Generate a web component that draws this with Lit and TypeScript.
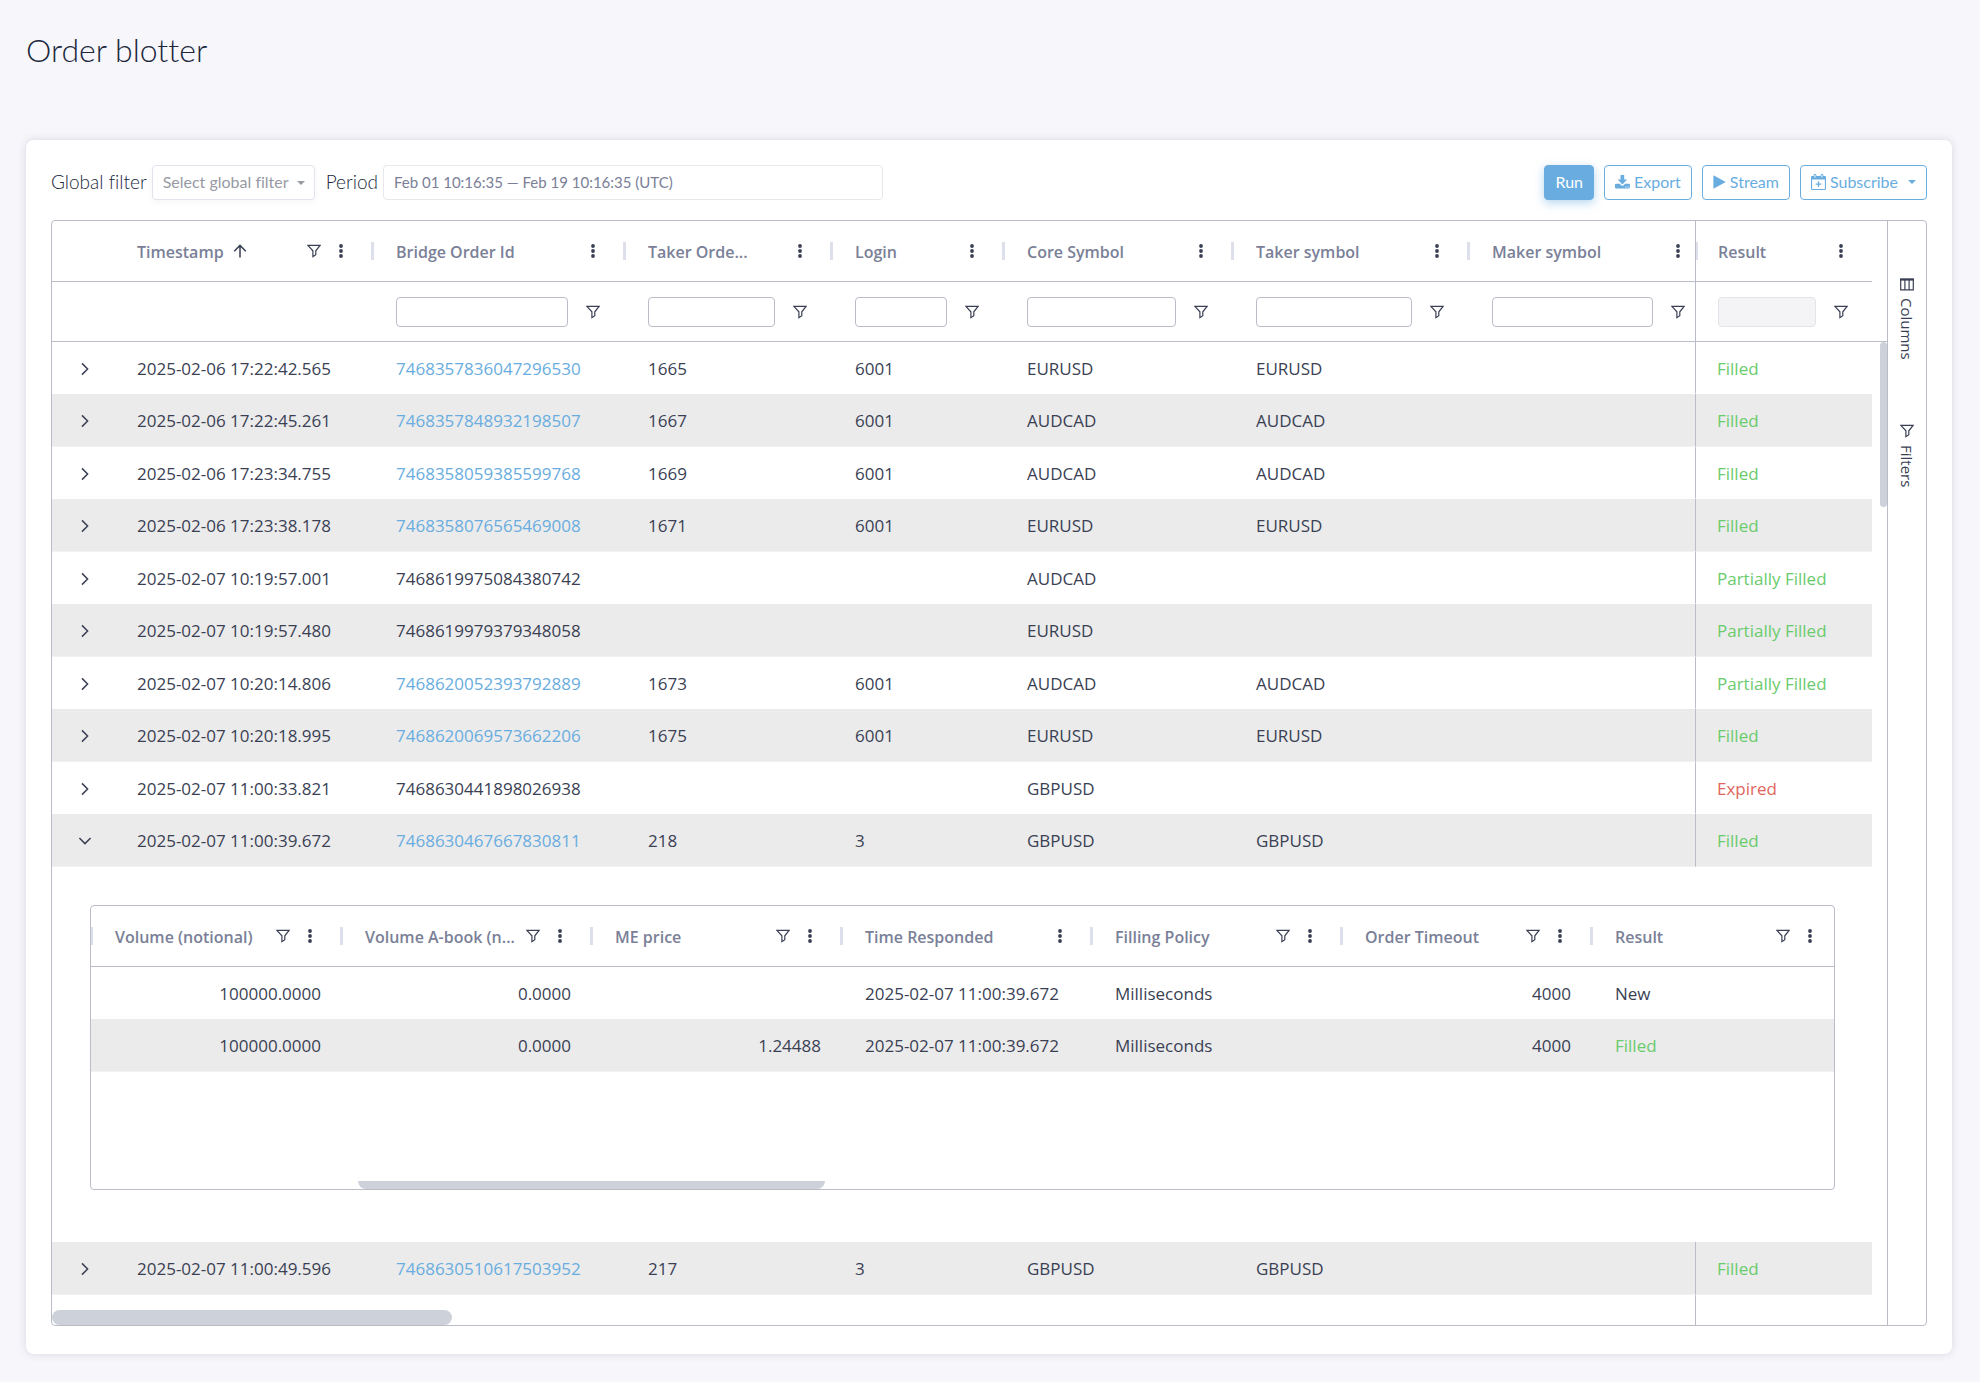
import { LitElement, html, css, svg, nothing } from "lit";
import { customElement, state } from "lit/decorators.js";
import { classMap } from "lit/directives/class-map.js";

interface Order {
  time: string;
  id: string;
  linked: boolean;
  takerOrder: string;
  login: string;
  core: string;
  taker: string;
  result: string;
}

interface Column {
  title: string;
  filterIcon?: boolean;
  sorted?: boolean;
}

const order = (
  time: string, id: string, linked: boolean, takerOrder: string,
  login: string, core: string, taker: string, result: string,
): Order => ({ time, id, linked, takerOrder, login, core, taker, result });

const ORDERS: Order[] = [
  order("2025-02-06 17:22:42.565", "7468357836047296530", true, "1665", "6001", "EURUSD", "EURUSD", "Filled"),
  order("2025-02-06 17:22:45.261", "7468357848932198507", true, "1667", "6001", "AUDCAD", "AUDCAD", "Filled"),
  order("2025-02-06 17:23:34.755", "7468358059385599768", true, "1669", "6001", "AUDCAD", "AUDCAD", "Filled"),
  order("2025-02-06 17:23:38.178", "7468358076565469008", true, "1671", "6001", "EURUSD", "EURUSD", "Filled"),
  order("2025-02-07 10:19:57.001", "7468619975084380742", false, "", "", "AUDCAD", "", "Partially Filled"),
  order("2025-02-07 10:19:57.480", "7468619979379348058", false, "", "", "EURUSD", "", "Partially Filled"),
  order("2025-02-07 10:20:14.806", "7468620052393792889", true, "1673", "6001", "AUDCAD", "AUDCAD", "Partially Filled"),
  order("2025-02-07 10:20:18.995", "7468620069573662206", true, "1675", "6001", "EURUSD", "EURUSD", "Filled"),
  order("2025-02-07 11:00:33.821", "7468630441898026938", false, "", "", "GBPUSD", "", "Expired"),
  order("2025-02-07 11:00:39.672", "7468630467667830811", true, "218", "3", "GBPUSD", "GBPUSD", "Filled"),
  order("2025-02-07 11:00:49.596", "7468630510617503952", true, "217", "3", "GBPUSD", "GBPUSD", "Filled"),
];

const COLUMNS: Column[] = [
  { title: "Timestamp", filterIcon: true, sorted: true },
  { title: "Bridge Order Id" },
  { title: "Taker Orde..." },
  { title: "Login" },
  { title: "Core Symbol" },
  { title: "Taker symbol" },
  { title: "Maker symbol" },
  { title: "Result" },
];

const DETAIL_COLUMNS: Column[] = [
  { title: "Volume (notional)", filterIcon: true },
  { title: "Volume A-book (n...", filterIcon: true },
  { title: "ME price", filterIcon: true },
  { title: "Time Responded" },
  { title: "Filling Policy", filterIcon: true },
  { title: "Order Timeout", filterIcon: true },
  { title: "Result", filterIcon: true },
];

const DETAILS = [
  ["100000.0000", "0.0000", "", "2025-02-07 11:00:39.672", "Milliseconds", "4000", "New"],
  ["100000.0000", "0.0000", "1.24488", "2025-02-07 11:00:39.672", "Milliseconds", "4000", "Filled"],
];

const NUMERIC = new Set([0, 1, 2, 5]);

const funnelIcon = svg`<svg class="icon" width="14" height="14" viewBox="0 0 14 14" aria-hidden="true">
  <path d="M.9 1.4h12.2L8.8 6.8v3.9L5.9 12.7V6.8z" fill="none" stroke="currentColor" stroke-width="1.2"/></svg>`;
const dotsIcon = svg`<svg class="icon" width="4" height="14" viewBox="0 0 4 14" aria-hidden="true">
  <g fill="currentColor"><circle cx="2" cy="2" r="1.9"/><circle cx="2" cy="7" r="1.9"/><circle cx="2" cy="12" r="1.9"/></g></svg>`;
const sortIcon = svg`<svg class="icon" width="14" height="14" viewBox="0 0 14 14" aria-hidden="true">
  <path d="M7 13.5V1.6M1.2 7.2 7 1.4l5.8 5.8" fill="none" stroke="currentColor" stroke-width="1.5"/></svg>`;
const chevronIcon = svg`<svg class="icon chevron" width="12" height="14" viewBox="0 0 12 14" aria-hidden="true">
  <path d="M3 1.4 8.600 7 3 12.600" fill="none" stroke="currentColor" stroke-width="1.500"/></svg>`;
const caretIcon = svg`<svg class="icon caret" width="8" height="4" viewBox="0 0 8 4" aria-hidden="true">
  <path d="M0 0h8L4 4z" fill="currentColor"/></svg>`;
const downloadIcon = svg`<svg class="icon" width="15" height="14" viewBox="0 0 15 14" aria-hidden="true">
  <path fill="currentColor" fill-rule="evenodd" d="M5.6 0h3.6v4.6h3L7.4 9.4 2.6 4.6h3zM.8 8.8h3.9l1.7 1.6q1 .9 2 0l1.7-1.6H14q.9 0 .9.8v3q0 .8-.9.8H.8q-.8 0-.8-.8v-3q0-.8.8-.8zm9.6 2.6v1h1.1v-1zm2.2 0v1h1.1v-1z"/></svg>`;
const playIcon = svg`<svg class="icon" width="13" height="14" viewBox="0 0 13 14" aria-hidden="true">
  <path d="M.4.3v13.4L12.8 7z" fill="currentColor"/></svg>`;
const calendarIcon = svg`<svg class="icon" width="15" height="16" viewBox="0 0 15 16" aria-hidden="true">
  <path fill="currentColor" fill-rule="evenodd" d="M1.2 2H2.6V1.2Q2.6 0 4 0t1.4 1.2V2h4.2v-.8Q9.6 0 11 0t1.4 1.2V2h1.4Q15 2 15 3.2v11.6Q15 16 13.8 16H1.2Q0 16 0 14.8V3.200Q0 2 1.2 2zM1.100 5.600v9.300h12.800V5.600zM3.600 1.100v2.500h.9V1.100zm6.900 0v2.500h.9V1.100z"/>
  <path d="M7.500 7.300v5.600M4.700 10.100h5.600" stroke="currentColor" stroke-width="1.300"/></svg>`;
const columnsIcon = svg`<svg class="icon" width="14" height="13" viewBox="0 0 14 13" aria-hidden="true">
  <path d="M.7 1.2h12.6v10.6H.7zM4.9 2v9.800M9.100 2v9.800" fill="none" stroke="currentColor" stroke-width="1.200"/>
  <path d="M.1.6h13.800v2H.1z" fill="currentColor"/></svg>`;

const tone = (value: string) => ({
  good: value.endsWith("Filled"),
  bad: value === "Expired",
});

@customElement("app-root")
export class OrderBlotter extends LitElement {
  @state() private expanded = "7468630467667830811";

  static styles = css`
    :host {
      --ink: #3a3f54;
      --muted: #7a8097;
      --line: #babcc8;
      --blue: #69ade0;
      --thumb: #cdd2da;
      display: block;
      box-sizing: border-box;
      min-height: 100vh;
      padding: 30px 28px 28px 26px;
      background: #f6f6fb;
      color: var(--ink);
      font-family: "Open Sans", "Noto Sans", sans-serif;
      font-size: 17px;
      font-variant-ligatures: none;
    }
    *, *::before { box-sizing: border-box; }
    button, input, select { font: inherit; color: inherit; margin: 0; }
    button { cursor: pointer; }
    .icon { display: block; flex: none; }
    .title {
      margin: 0 0 70px;
      font: 300 32px/40px Lato, sans-serif;
      font-variant-ligatures: none;
      color: #20263b;
    }
    .card {
      padding: 25px 25px 28px;
      border-radius: 8px;
      background: #fff;
      box-shadow: 0 0 8px rgba(60, 60, 80, 0.16);
    }
    .toolbar {
      display: flex;
      align-items: center;
      gap: 5px;
      height: 35px;
      margin-bottom: 20px;
      font-family: Lato, sans-serif;
    }
    .label {
      padding-bottom: 3px;
      font-size: 19px;
      font-weight: 300;
      color: #20263b;
    }
    .picker {
      position: relative;
      display: flex;
      align-items: center;
      margin-right: 6px;
      color: #979aa3;
    }
    .picker .caret { position: absolute; right: 10px; pointer-events: none; }
    .select {
      width: 163px;
      height: 35px;
      padding: 0 10px 2px;
      border: 1px solid #e2e3ec;
      border-radius: 4px;
      background: #fff;
      box-shadow: 0 2px 6px rgba(60, 60, 80, 0.05);
      appearance: none;
      font-size: 16px;
    }
    .period {
      width: 500px;
      height: 35px;
      padding: 0 10px 2px;
      border: 1px solid #e7e7ec;
      border-radius: 4px;
      background: #fff;
      color: var(--muted);
      font-size: 15px;
    }
    .actions { display: flex; gap: 10px; margin-left: auto; }
    .btn {
      display: flex;
      align-items: center;
      gap: 4px;
      height: 35px;
      padding: 0 10px 2px;
      border: 1px solid var(--blue);
      border-radius: 4px;
      background: #fff;
      color: var(--blue);
      font-size: 16px;
    }
    .btn .caret { margin-left: 6px; }
    .btn.primary {
      background: var(--blue);
      color: #fff;
      box-shadow: 0 3px 10px rgba(105, 173, 224, 0.5);
    }
    .grid {
      display: flex;
      border: 1px solid var(--line);
      border-radius: 4px;
    }
    .main { flex: 1; min-width: 0; }
    table {
      width: 100%;
      border-collapse: separate;
      border-spacing: 0;
      table-layout: fixed;
    }
    th, td { padding: 0; text-align: left; font-weight: inherit; }
    .c-toggle { width: 61px; }
    .c-time { width: 259px; }
    .c-id { width: 252px; }
    .c-order { width: 207px; }
    .c-login { width: 172px; }
    .c-core { width: 229px; }
    .c-taker { width: 236px; }
    .c-result { width: 177px; }
    .c-detail { width: 250px; }
    .head th {
      height: 61px;
      border-bottom: 1px solid var(--line);
      color: var(--muted);
      font-size: 16px;
      font-weight: 600;
    }
    .search th {
      height: 60px;
      border-bottom: 1px solid var(--line);
    }
    .cell {
      position: relative;
      display: flex;
      align-items: center;
      height: 60px;
      padding: 0 29px 0 24px;
    }
    .handle::before {
      content: "";
      position: absolute;
      left: -1px;
      width: 3px;
      height: 18px;
      background: #dde0ea;
    }
    .name { padding-top: 2px; white-space: nowrap; }
    .glyph {
      display: flex;
      flex: none;
      padding: 0;
      border: 0;
      background: none;
      color: var(--ink);
    }
    .sort { margin-left: 9px; }
    .tools { display: flex; gap: 18px; margin-left: auto; }
    .search .cell { height: 59px; gap: 18px; padding-right: 24px; }
    .over .cell { margin-right: -14px; }
    .field {
      flex: 1;
      min-width: 0;
      height: 30px;
      padding: 0 6px;
      border: 1px solid var(--line);
      border-radius: 4px;
      background: #fff;
    }
    .field:disabled { border-color: #e3e4ea; background: #f4f4f7; }
    .pinned { border-left: 1px solid var(--line); }
    .pinned .cell { padding-left: 22px; }
    .pinned .handle::before { left: 0; width: 2px; }
    .row td {
      height: 52px;
      padding: 2px 0 0 24px;
      border-bottom: 1px solid #fff;
      white-space: nowrap;
      line-height: 24px;
    }
    .row.odd td { height: 53px; background: #ebebeb; border-bottom-color: #f2f2f2; }
    .row td.pinned { padding-left: 21px; }
    .row td.number { padding-right: 20px; text-align: right; }
    .row .toggle-cell { padding-left: 27px; }
    .open .chevron { transform: rotate(90deg); }
    .link { color: var(--blue); text-decoration: none; }
    .good { color: #6acb6c; }
    .bad { color: #e0655c; }
    .detail-cell { height: 375px; padding: 38px 37px 38px 38px; vertical-align: top; }
    .detail {
      display: flex;
      flex-direction: column;
      height: 285px;
      border: 1px solid var(--line);
      border-radius: 4px;
      overflow: hidden;
    }
    .detail table { width: 1750px; }
    .detail-thumb {
      width: 467px;
      height: 8px;
      margin: auto 0 0 267px;
      border-radius: 0 0 8px 8px;
      background: var(--thumb);
    }
    .tail td { height: 30px; vertical-align: bottom; }
    .thumb-x {
      width: 400px;
      height: 15px;
      border-radius: 8px;
      background: var(--thumb);
    }
    .gutter {
      display: flex;
      flex-direction: column;
      align-items: flex-end;
      width: 15px;
    }
    .corner { width: 15px; height: 121px; border-bottom: 1px solid var(--line); }
    .thumb-y {
      width: 7px;
      height: 165px;
      border-radius: 4px;
      background: var(--thumb);
    }
    .side {
      display: flex;
      flex-direction: column;
      align-items: stretch;
      gap: 64px;
      width: 39px;
      padding-top: 57px;
      border-left: 1px solid var(--line);
    }
    .side-btn {
      display: flex;
      flex-direction: column;
      align-items: center;
      gap: 7px;
      padding: 0;
      border: 0;
      background: none;
      font-size: 15px;
    }
    .side-text { writing-mode: vertical-rl; line-height: 20px; }
  `;

  private toggle(id: string) {
    this.expanded = this.expanded === id ? "" : id;
  }

  private heading(col: Column, index: number, extra: Record<string, boolean> = {}) {
    return html`<th scope="col" class=${classMap(extra)}>
      <div class=${classMap({ cell: true, handle: index > 0 })}>
        <span class="name">${col.title}</span>
        ${col.sorted
          ? html`<button class="glyph sort" aria-label="Sorted ascending">${sortIcon}</button>`
          : nothing}
        <span class="tools">
          ${col.filterIcon
            ? html`<button class="glyph" aria-label="Filter ${col.title}">${funnelIcon}</button>`
            : nothing}
          <button class="glyph" aria-label="${col.title} menu">${dotsIcon}</button>
        </span>
      </div>
    </th>`;
  }

  private search(col: Column, index: number) {
    if (index === 0) return html`<th></th>`;
    const pinned = index === 7;
    return html`<th class=${classMap({ pinned, over: index === 6 })}>
      <div class="cell">
        <input class="field" type="text" aria-label="${col.title} filter" ?disabled=${pinned} />
        <button class="glyph" aria-label="${col.title} filter options">${funnelIcon}</button>
      </div>
    </th>`;
  }

  private detail() {
    return html`<tr>
      <td class="detail-cell" colspan="9">
        <div class="detail">
          <table>
            <colgroup>${DETAIL_COLUMNS.map(() => html`<col class="c-detail" />`)}</colgroup>
            <thead>
              <tr class="head">${DETAIL_COLUMNS.map((c) => this.heading(c, 1))}</tr>
            </thead>
            <tbody>
              ${DETAILS.map((cells, r) => html`<tr class=${classMap({ row: true, odd: r % 2 === 1 })}>
                ${cells.map((v, i) => html`<td class=${classMap({ number: NUMERIC.has(i), ...tone(v) })}>${v}</td>`)}
              </tr>`)}
            </tbody>
          </table>
          <div class="detail-thumb"></div>
        </div>
      </td>
    </tr>`;
  }

  private row(o: Order, index: number) {
    const open = this.expanded === o.id;
    const passed = ORDERS.slice(0, index).some((p) => p.id === this.expanded);
    const odd = (index + (passed ? 1 : 0)) % 2 === 1;
    return html`<tr class=${classMap({ row: true, odd, open })}>
        <td class="toggle-cell">
          <button class="glyph" aria-label="Toggle details" aria-expanded=${open} @click=${() => this.toggle(o.id)}>
            ${chevronIcon}
          </button>
        </td>
        <td>${o.time}</td>
        <td>${o.linked ? html`<a class="link" href="#${o.id}">${o.id}</a>` : o.id}</td>
        <td>${o.takerOrder}</td>
        <td>${o.login}</td>
        <td>${o.core}</td>
        <td>${o.taker}</td>
        <td></td>
        <td class="pinned"><span class=${classMap(tone(o.result))}>${o.result}</span></td>
      </tr>
      ${open ? this.detail() : nothing}`;
  }

  render() {
    return html`
      <h1 class="title">Order blotter</h1>
      <section class="card">
        <div class="toolbar">
          <label class="label" for="global-filter">Global filter</label>
          <span class="picker">
            <select class="select" id="global-filter">
              <option>Select global filter</option>
            </select>
            ${caretIcon}
          </span>
          <label class="label" for="period">Period</label>
          <input class="period" id="period" type="text" value="Feb 01 10:16:35 — Feb 19 10:16:35 (UTC)" />
          <div class="actions">
            <button class="btn primary">Run</button>
            <button class="btn">${downloadIcon}Export</button>
            <button class="btn">${playIcon}Stream</button>
            <button class="btn">${calendarIcon}Subscribe${caretIcon}</button>
          </div>
        </div>
        <div class="grid">
          <div class="main">
            <table>
              <colgroup>
                <col class="c-toggle" /><col class="c-time" /><col class="c-id" />
                <col class="c-order" /><col class="c-login" /><col class="c-core" />
                <col class="c-taker" /><col /><col class="c-result" />
              </colgroup>
              <thead>
                <tr class="head">
                  <th></th>
                  ${COLUMNS.map((c, i) => this.heading(c, i, { pinned: i === 7, over: i === 6 }))}
                </tr>
                <tr class="search">
                  <th></th>
                  ${COLUMNS.map((c, i) => this.search(c, i))}
                </tr>
              </thead>
              <tbody>
                ${ORDERS.map((o, i) => this.row(o, i))}
                <tr class="tail">
                  <td colspan="8"><div class="thumb-x"></div></td>
                  <td class="pinned"></td>
                </tr>
              </tbody>
            </table>
          </div>
          <div class="gutter">
            <div class="corner"></div>
            <div class="thumb-y"></div>
          </div>
          <div class="side">
            <button class="side-btn">${columnsIcon}<span class="side-text">Columns</span></button>
            <button class="side-btn">${funnelIcon}<span class="side-text">Filters</span></button>
          </div>
        </div>
      </section>
    `;
  }
}
